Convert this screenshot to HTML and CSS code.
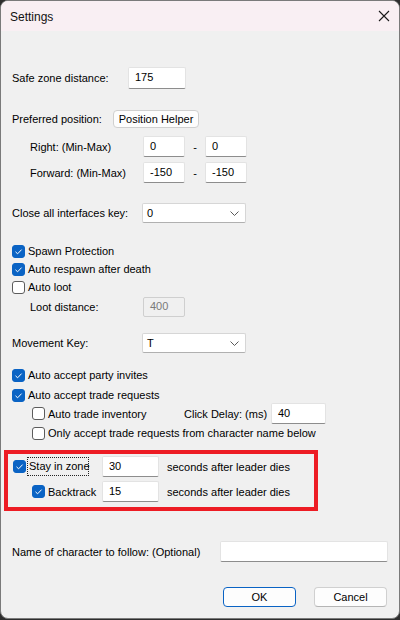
FILE: index.html
```html
<!DOCTYPE html>
<html>
<head>
<meta charset="utf-8">
<link rel="stylesheet" href="styles.css">
</head>
<body>
<div class="window">
  <div class="titlebar">
    <span class="title">Settings</span>
    <svg class="close" width="12" height="12" viewBox="0 0 12 12"><path d="M1 1 L11 11 M11 1 L1 11" stroke="#1a1a1a" stroke-width="1.1" fill="none"/></svg>
  </div>
  <div class="content">
    <div class="row r-safe">
      <span class="lbl w116">Safe zone distance:</span>
      <span class="input w58">175</span>
    </div>
    <div class="row r-pref">
      <span class="lbl w101">Preferred position:</span>
      <span class="btn w86">Position Helper</span>
    </div>
    <div class="row r-right indent18">
      <span class="lbl w113">Right: (Min-Max)</span>
      <span class="input w42 h21">0</span>
      <span class="dash">-</span>
      <span class="input w42 h21">0</span>
    </div>
    <div class="row r-fwd indent18">
      <span class="lbl w113">Forward: (Min-Max)</span>
      <span class="input w42 h21">-150</span>
      <span class="dash">-</span>
      <span class="input w42 h21">-150</span>
    </div>
    <div class="row r-close">
      <span class="lbl w130">Close all interfaces key:</span>
      <span class="combo w104">0<svg class="chev" width="9" height="5" viewBox="0 0 9 5"><path d="M0.5 0.5 L4.5 4.5 L8.5 0.5" stroke="#5a5a5a" stroke-width="1" fill="none"/></svg></span>
    </div>
    <div class="row chk r-spawn"><span class="box on"><svg width="13" height="13" viewBox="0 0 13 13"><path d="M3.5 6.8 L5.6 8.8 L9.6 4.6" stroke="#fff" stroke-width="1" fill="none"/></svg></span>Spawn Protection</div>
    <div class="row chk"><span class="box on"><svg width="13" height="13" viewBox="0 0 13 13"><path d="M3.5 6.8 L5.6 8.8 L9.6 4.6" stroke="#fff" stroke-width="1" fill="none"/></svg></span>Auto respawn after death</div>
    <div class="row chk"><span class="box"></span>Auto loot</div>
    <div class="row r-loot indent18">
      <span class="lbl w113">Loot distance:</span>
      <span class="input w42 disabled">400</span>
    </div>
    <div class="row r-move">
      <span class="lbl w130">Movement Key:</span>
      <span class="combo w104">T<svg class="chev" width="9" height="5" viewBox="0 0 9 5"><path d="M0.5 0.5 L4.5 4.5 L8.5 0.5" stroke="#5a5a5a" stroke-width="1" fill="none"/></svg></span>
    </div>
    <div class="row chk r-party"><span class="box on"><svg width="13" height="13" viewBox="0 0 13 13"><path d="M3.5 6.8 L5.6 8.8 L9.6 4.6" stroke="#fff" stroke-width="1" fill="none"/></svg></span>Auto accept party invites</div>
    <div class="row chk r-trade"><span class="box on"><svg width="13" height="13" viewBox="0 0 13 13"><path d="M3.5 6.8 L5.6 8.8 L9.6 4.6" stroke="#fff" stroke-width="1" fill="none"/></svg></span>Auto accept trade requests</div>
    <div class="row chk r-inv indent20">
      <span class="box"></span><span class="w136">Auto trade inventory</span>
      <span class="lbl w87">Click Delay: (ms)</span>
      <span class="input w55 h21">40</span>
    </div>
    <div class="row chk indent20"><span class="box"></span>Only accept trade requests from character name below</div>
    <div class="redbox">
      <div class="row r-stay">
        <span class="box on"><svg width="13" height="13" viewBox="0 0 13 13"><path d="M3.5 6.8 L5.6 8.8 L9.6 4.6" stroke="#fff" stroke-width="1" fill="none"/></svg></span>
        <span class="focus">Stay in zone</span>
        <span class="input w57 h21">30</span>
        <span class="after">seconds after leader dies</span>
      </div>
      <div class="row r-back">
        <span class="box on"><svg width="13" height="13" viewBox="0 0 13 13"><path d="M3.5 6.8 L5.6 8.8 L9.6 4.6" stroke="#fff" stroke-width="1" fill="none"/></svg></span>
        <span class="backlbl">Backtrack</span>
        <span class="input w57 h21">15</span>
        <span class="after">seconds after leader dies</span>
      </div>
    </div>
    <div class="row r-name">
      <span class="lbl w208">Name of character to follow: (Optional)</span>
      <span class="input w168 h21"></span>
    </div>
    <div class="row r-buttons">
      <span class="btn2 ok">OK</span>
      <span class="btn2 cancel">Cancel</span>
    </div>
  </div>
</div>
</body>
</html>
```

FILE: styles.css
```css
* { box-sizing: border-box; }
html, body { margin: 0; padding: 0; }
body {
  width: 400px;
  height: 620px;
  background: #2e2e2e;
  font-family: "Liberation Sans", Arial, sans-serif;
  font-size: 11px;
  color: #000;
  overflow: hidden;
}
.window {
  width: 400px;
  height: 619px;
  background: #f0f0f0;
  border: 1px solid #7a7a7a;
  border-radius: 8px;
  overflow: hidden;
}
.titlebar {
  height: 30px;
  background: #f9eff3;
  display: flex;
  align-items: center;
  justify-content: space-between;
  padding: 0 9px 0 9px;
}
.title { font-size: 12px; color: #111; padding-top: 1px; }
.content { padding-left: 11px; }
.row { display: flex; align-items: center; white-space: nowrap; }
.lbl { display: inline-block; }
.w116 { width: 116px; }
.w101 { width: 101px; }
.w113 { width: 113px; }
.w130 { width: 130px; }
.w87 { width: 87px; }
.w136 { width: 136px; }
.w208 { width: 208px; }
.indent18 { padding-left: 18px; }
.indent20 { padding-left: 20px; }

.input {
  display: inline-flex;
  align-items: center;
  height: 22px;
  padding: 0 0 2px 6px;
  background: #fff;
  border: 1px solid #e3e3e3;
  border-bottom-color: #8d8d8d;
  border-radius: 2px;
  color: #000;
}
.h21 { height: 21px; }
.w58 { width: 58px; }
.w42 { width: 42px; }
.w55 { width: 55px; }
.w57 { width: 57px; }
.w168 { width: 168px; }
.input.disabled {
  background: #f0f0f0;
  border: 1px solid #cfcfcf;
  color: #7a7a7a;
  height: 20px;
}
.dash { width: 20px; text-align: center; }
.btn {
  display: inline-flex;
  align-items: center;
  justify-content: center;
  height: 18px;
  background: #fdfdfd;
  border: 1px solid #d0d0d0;
  border-radius: 4px;
}
.w86 { width: 86px; }
.combo {
  display: inline-flex;
  align-items: center;
  justify-content: space-between;
  height: 20px;
  background: #fff;
  border: 1px solid #d6d6d6;
  border-bottom-color: #b0b0b0;
  border-radius: 2px;
  padding: 0 6px 0 4px;
}
.w104 { width: 104px; }

.chk { height: 18px; }
.box {
  display: inline-block;
  width: 13px;
  height: 13px;
  margin-right: 3px;
  border: 1px solid #5c5c5c;
  border-radius: 3px;
  background: #fff;
  flex: none;
}
.box.on {
  background: #0a63c4;
  border-color: #0a63c4;
}
.box.on svg { display: block; margin: -1px 0 0 -1px; }

.r-safe { height: 22px; margin-top: 36px; }
.r-pref { height: 18px; margin-top: 21px; }
.r-right { height: 21px; margin-top: 8px; }
.r-fwd { height: 21px; margin-top: 5px; }
.r-close { height: 20px; margin-top: 20px; }
.r-spawn { margin-top: 19px; }
.r-loot { height: 20px; margin-top: 1px; }
.r-move { height: 20px; margin-top: 16px; }
.r-party { margin-top: 13px; }
.r-trade { margin-top: 2px; }
.r-inv { height: 21px; margin-top: -1px; }

.redbox {
  margin-top: 8px;
  margin-left: -8px;
  width: 314px;
  border: 4px solid #ed1c24;
  padding: 2px 0 5px 5px;
}
.r-stay { height: 21px; }
.r-back { height: 21px; margin-top: 4px; padding-left: 19px; }
.focus {
  display: inline-block;
  width: 62px;
  height: 19px;
  line-height: 17px;
  margin-left: -1px;
  margin-right: 13px;
  border: 1px dotted #222;
  padding-left: 1px;
}
.backlbl { width: 54px; }
.after { margin-left: 8px; }
.r-stay .box { margin-right: 2px; }
.r-back .box { margin-right: 3px; }

.r-name { height: 21px; margin-top: 30px; }
.r-buttons { height: 20px; margin-top: 25px; padding-left: 211px; }
.btn2 {
  display: inline-flex;
  align-items: center;
  justify-content: center;
  width: 73px;
  height: 20px;
  background: #fdfdfd;
  border: 1px solid #d0d0d0;
  border-bottom-color: #b5b5b5;
  border-radius: 4px;
}
.ok { border-color: #0a63c4; }
.cancel { margin-left: 18px; }
```
